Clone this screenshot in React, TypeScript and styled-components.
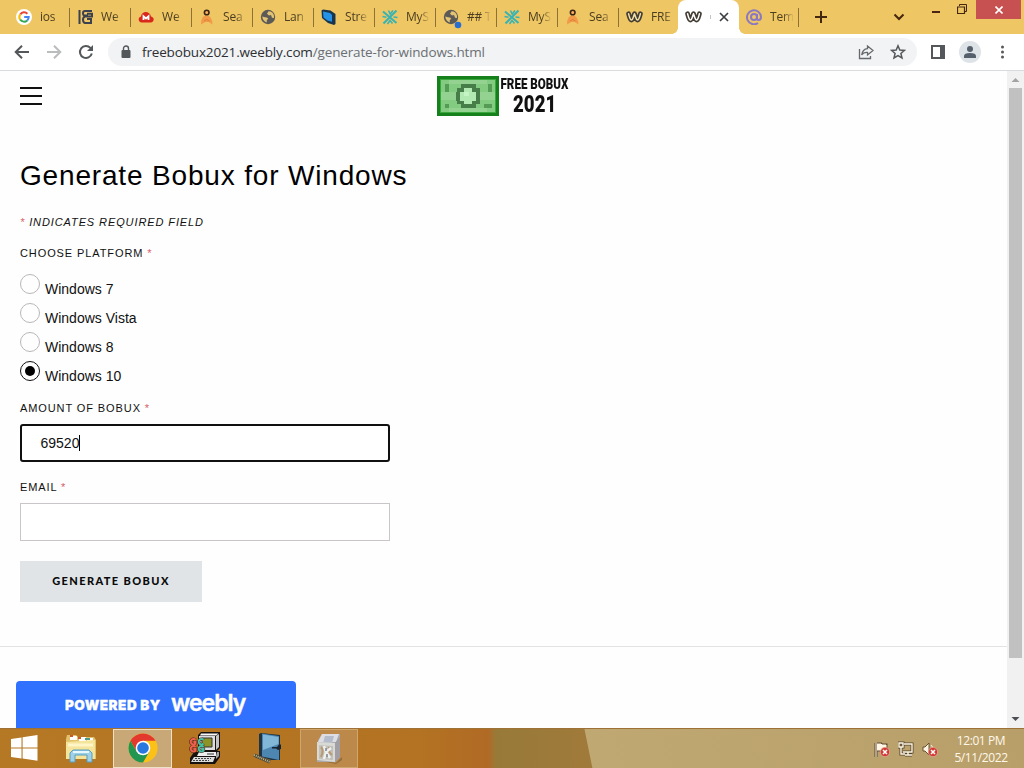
import { ReactNode, useState } from "react";
import styled, { createGlobalStyle } from "styled-components";

const GlobalStyle = createGlobalStyle`
  * {
    box-sizing: border-box;
  }
  body {
    margin: 0;
    overflow: hidden;
    background: white;
  }
`;
const Desktop = styled.div`
  width: 1024px;
  height: 768px;
  display: flex;
  flex-direction: column;
  overflow: hidden;
  font-family: "Open Sans", "Noto Sans", sans-serif;
`;
const TabStrip = styled.div`
  height: 34px;
  flex-shrink: 0;
  display: flex;
  padding-left: 9px;
  background: #eec664;
`;
const TabBox = styled.div<{ $active?: boolean; $line?: boolean; $width?: number }>`
  position: relative;
  width: ${(props) => props.$width || 61}px;
  height: 34px;
  flex-shrink: 0;
  display: flex;
  align-items: center;
  padding-left: 7px;
  background: ${(props) => (props.$active ? "#fff" : "transparent")};
  border-radius: ${(props) => (props.$active ? "8px 8px 0 0" : "0")};
  &::after {
    content: "";
    display: ${(props) => (props.$line ? "block" : "none")};
    position: absolute;
    right: 0;
    top: 8px;
    width: 1px;
    height: 19px;
    background: #8d7136;
  }
`;
const Flare = styled.i<{ $side: "left" | "right" }>`
  position: absolute;
  bottom: 0;
  ${(props) => props.$side}: -6px;
  width: 6px;
  height: 6px;
  background: radial-gradient(
    circle at ${(props) => (props.$side === "left" ? "0 0" : "6px 0")},
    transparent 5.5px,
    #fff 6px
  );
`;
const TabTitle = styled.span`
  width: 23px;
  margin-left: 8px;
  overflow: hidden;
  white-space: nowrap;
  font-size: 12px;
  line-height: 16px;
  letter-spacing: -0.2px;
  color: #4b3d20;
  mask-image: linear-gradient(to right, #000 13px, transparent 24px);
`;
const Icon = styled.svg`
  display: block;
  flex-shrink: 0;
`;
const TitleSliver = styled.i`
  width: 1px;
  height: 4px;
  margin: 0 8px 0 8px;
  background: #c4c4c6;
`;
const NewTab = styled(Icon)`
  margin: 10px 0 0 15px;
`;
const WindowControls = styled.div`
  display: flex;
  margin-left: auto;
  align-items: flex-start;
`;
const Chevron = styled(Icon)`
  margin: 13px 27px 0 0;
`;
const Minimize = styled.div`
  width: 8px;
  height: 2px;
  margin: 11px 17px 0 0;
  background: #4a2414;
`;
const Restore = styled(Icon)`
  margin: 4px 9px 0 0;
`;
const CloseWindow = styled.div`
  width: 45px;
  height: 19px;
  margin-right: 3px;
  display: flex;
  align-items: center;
  justify-content: center;
  background: #c75050;
`;
const Toolbar = styled.div`
  height: 37px;
  flex-shrink: 0;
  display: flex;
  align-items: center;
  padding: 0 12px 0 14px;
  border-bottom: 1px solid #dadbdd;
  background: #fff;
`;
const NavButtons = styled.div`
  display: flex;
  gap: 16px;
  width: 94px;
`;
const AddressBar = styled.div`
  width: 809px;
  height: 28px;
  display: flex;
  align-items: center;
  padding: 0 11px 0 12px;
  border-radius: 14px;
  background: #f1f3f4;
`;
const Url = styled.div`
  flex: 1;
  margin-left: 10px;
  font-size: 13.5px;
  line-height: 20px;
  letter-spacing: -0.15px;
  color: #6b6f73;
  span {
    color: #2d2f33;
  }
`;
const AddressActions = styled.div`
  display: flex;
  gap: 16px;
`;
const BrowserActions = styled.div`
  display: flex;
  align-items: center;
  margin-left: 13px;
`;
const Avatar = styled.div`
  width: 22px;
  height: 22px;
  margin: 0 13px 0 13px;
  display: flex;
  align-items: center;
  justify-content: center;
  border-radius: 50%;
  background: #dee3e8;
`;
const Viewport = styled.div`
  height: 657px;
  flex-shrink: 0;
  display: flex;
`;
const Page = styled.main`
  width: 1007px;
  display: flex;
  flex-direction: column;
  background: #fefefe;
  font-family: "Liberation Sans", Arial, sans-serif;
  color: #111;
`;
const SiteHeader = styled.header`
  height: 50px;
  display: grid;
  grid-template-columns: 417px 1fr;
  align-items: center;
  padding-left: 20px;
`;
const Burger = styled.div`
  width: 22px;
  height: 18px;
  border: solid #111;
  border-width: 2px 0;
  display: flex;
  align-items: center;
  &::before {
    content: "";
    width: 22px;
    height: 2px;
    background: #111;
  }
`;
const Brand = styled.div`
  display: flex;
  align-items: center;
  gap: 1px;
`;
const BrandText = styled.div`
  width: 69px;
  height: 40px;
  padding-top: 1px;
  display: flex;
  flex-direction: column;
  align-items: center;
  font-family: Roboto, sans-serif;
  font-weight: 900;
  color: #111;
`;
const BrandLine = styled.span<{ $size: number; $squeeze: number }>`
  font-size: ${(props) => props.$size}px;
  line-height: ${(props) => (props.$size > 20 ? 24 : 16)}px;
  white-space: nowrap;
  transform: scaleX(${(props) => props.$squeeze});
`;
const Content = styled.section`
  height: 526px;
  padding: 35px 0 0 20px;
  border-bottom: 1px solid #e3e3e3;
`;
const Title = styled.h2`
  margin: 0;
  font-size: 28px;
  line-height: 40px;
  font-weight: 400;
  letter-spacing: 0.83px;
  color: #000;
`;
const Label = styled.label<{ $top: number; $italic?: boolean }>`
  display: block;
  margin-top: ${(props) => props.$top}px;
  font-size: 11px;
  line-height: 16px;
  letter-spacing: 0.9px;
  text-transform: uppercase;
  font-style: ${(props) => (props.$italic ? "italic" : "normal")};
`;
const Star = styled.span`
  color: #d5606a;
`;
const Options = styled.div`
  margin-top: 13px;
  height: 116px;
`;
const Option = styled.div`
  height: 29px;
  display: flex;
  gap: 5px;
  font-size: 14px;
  line-height: 30px;
  cursor: pointer;
`;
const Radio = styled.span<{ $checked: boolean }>`
  width: 20px;
  height: 20px;
  display: flex;
  align-items: center;
  justify-content: center;
  border: 1px solid ${(props) => (props.$checked ? "#111" : "#b9b6b9")};
  border-radius: 50%;
  &::before {
    content: "";
    width: 10px;
    height: 10px;
    border-radius: 50%;
    background: ${(props) => (props.$checked ? "#000" : "transparent")};
  }
`;
const Field = styled.div<{ $focused?: boolean }>`
  width: 370px;
  height: 38px;
  margin-top: 8px;
  display: flex;
  align-items: center;
  padding-left: ${(props) => (props.$focused ? 18.5 : 20)}px;
  border: ${(props) => (props.$focused ? "2px solid #101010" : "1px solid #c9c5c9")};
  border-radius: ${(props) => (props.$focused ? 3 : 0)}px;
  font-size: 14px;
  background: #fff;
`;
const Caret = styled.i`
  width: 1px;
  height: 16px;
  background: #000;
`;
const Submit = styled.button`
  display: block;
  width: 182px;
  height: 41px;
  margin-top: 20px;
  padding: 0 0 2px;
  border: 0;
  background: #e0e4e7;
  font-family: Lato, sans-serif;
  font-size: 11px;
  font-weight: 900;
  letter-spacing: 1.4px;
  color: #0a0a0a;
`;
const WeeblyBadge = styled.div`
  width: 280px;
  height: 47px;
  margin: 34px 0 0 16px;
  display: flex;
  align-items: center;
  padding-left: 49px;
  border-radius: 4px 4px 0 0;
  background: #3071ff;
  color: #fff;
  font-family: Inter, sans-serif;
`;
const Powered = styled.span`
  width: 106px;
  font-size: 13.5px;
  font-weight: 900;
  letter-spacing: 0.5px;
  white-space: nowrap;
  -webkit-text-stroke: 0.3px #fff;
`;
const WeeblyName = styled.span`
  font-size: 23px;
  line-height: 30px;
  font-weight: 600;
  letter-spacing: -1px;
  margin-top: -4px;
  -webkit-text-stroke: 0.4px #fff;
`;
const Scrollbar = styled.div`
  width: 17px;
  display: flex;
  flex-direction: column;
  align-items: center;
  background: #f1f1f1;
`;
const Thumb = styled.div`
  width: 13px;
  height: 570px;
  margin-bottom: auto;
  background: #c1c1c1;
`;
const Taskbar = styled.footer`
  height: 40px;
  flex-shrink: 0;
  display: flex;
  border-top: 1px solid #9e7236;
  background:
    linear-gradient(78.5deg, transparent 580px, #c0a873 581px, #b89f6a 100%),
    linear-gradient(
      to right,
      #b57824 0,
      #b37322 420px,
      #b16a25 488px,
      #987a38 496px,
      #a17a3a 600px
    );
`;
const TaskButton = styled.div<{ $width: number; $state?: "active" | "open" }>`
  width: ${(props) => props.$width}px;
  height: 39px;
  display: flex;
  align-items: center;
  justify-content: center;
  padding-bottom: 2px;
  border: ${(props) =>
    props.$state === "active"
      ? "1px solid #eee1c9"
      : props.$state === "open"
        ? "1px solid #cfa66b"
        : "0"};
  background: ${(props) =>
    props.$state === "active"
      ? "#c9a878"
      : props.$state === "open"
        ? "#bd894a"
        : "transparent"};
`;
const Tray = styled.div`
  display: flex;
  align-items: center;
  gap: 8px;
  margin-left: auto;
`;
const Clock = styled.div`
  width: 86px;
  margin-left: -8px;
  text-align: center;
  font-size: 12px;
  line-height: 17px;
  letter-spacing: -0.4px;
  color: #fff8e9;
`;

const GoogleIcon = () => (
  <Icon width="16" height="16" viewBox="0 0 16 16" fill="none" strokeWidth="2">
    <circle cx="8" cy="8" r="8" fill="#fff" />
    <path d="M4.3 5.3A4.7 4.7 0 0 1 11.4 4.7" stroke="#ea4335" />
    <path d="M4.3 5.3A4.7 4.7 0 0 0 4.2 10.7" stroke="#fbbc05" />
    <path d="M4.2 10.7A4.7 4.7 0 0 0 11.2 11.4" stroke="#34a853" />
    <path d="M8.2 8H12.7A4.7 4.7 0 0 1 11.2 11.4" stroke="#4285f4" />
  </Icon>
);
const StackIcon = () => (
  <Icon width="16" height="16" viewBox="0 0 16 16" fill="none" stroke="#3b414e" strokeWidth="2">
    <path d="M2.5 1V15M15 2H8Q6 2 6 4.3T8 6.5H11M10 4.8H15V7.5H8Q6 8 6 10.8T8 14H14V10H10" />
  </Icon>
);
const CloudIcon = () => (
  <Icon width="16" height="16" viewBox="0 0 16 16">
    <path d="M4 13.5C-.5 13.5 0 8 3 7.5C3.5 1.5 12 1.5 13 7.5C17 8.5 16.3 13.5 12.5 13.5Z" fill="#d9271c" />
    <path d="M5.5 11V7.2L8 9.5L10.5 7.2V11" fill="none" stroke="#fff" strokeWidth="1.8" />
  </Icon>
);
const PersonIcon = () => (
  <Icon width="16" height="16" viewBox="0 0 16 16">
    <path d="M2 15.5Q2 6.5 7.5 6.5T13.5 15.5L9.8 13H6.2Z" fill="#f39a49" />
    <path d="M5 12Q7.7 9 10.5 12" fill="none" stroke="#d88135" />
    <circle cx="7.7" cy="3.5" r="2.3" fill="#f8b45b" stroke="#3e2318" strokeWidth="1.6" />
  </Icon>
);
const GlobeIcon = ({ dot }: { dot?: boolean }) => (
  <Icon width="16" height="16" viewBox="0 0 16 16" overflow="visible">
    <circle cx="8" cy="8" r="7.2" fill="#5c5a56" />
    <path d="M2.2 7.5L5 8.2Q8 8 8.2 10Q6 10.5 7 13.5Q3 12.5 2.2 7.5ZM8.5 2.2L7 4.8L9 6.5L11 6L12 8.8L14 9Q14.5 4 10.5 2.4Z" fill="#e2c373" />
    {dot ? <circle cx="15" cy="16" r="3.3" fill="#286ed2" /> : null}
  </Icon>
);
const BlocksIcon = () => (
  <Icon width="16" height="16" viewBox="0 0 16 16">
    <path d="M.5 1.5L2 .5L9.5 1.5L14.5 5V15L13 16L7 14L1 9Z" fill="#19344d" />
    <path d="M2 2.5L9 4L11 6V12.8L6.5 11.5L2.5 8.5Z" fill="#2493e7" />
  </Icon>
);
const MySiteIcon = () => (
  <Icon width="16" height="16" viewBox="0 0 16 16" fill="none" stroke="#35b3b5" strokeWidth="2">
    <path d="M1 2.5L14.5 14M14.5 1.5L1.5 14.5" />
    <path d="M6.5 1.5L8.2 5L11 1.5M5.5 15L8 11.5L10.5 14.5M.5 7.5L4.5 8.2M11.5 8L15.5 8.5" strokeWidth="1.5" />
  </Icon>
);
const WeeblyIcon = ({ light = "#f3dfaa" }: { light?: string }) => (
  <Icon width="17" height="16" viewBox="0 0 17 16" fill="none" strokeLinejoin="round" strokeLinecap="round">
    <path d="M2.6 4.8C3.5 8 4 11 5.5 11S7.5 7 8.5 4.8C9.5 7 10 11 11.5 11S13.5 8 14.4 4.8" stroke="#433d34" strokeWidth="4.8" />
    <path d="M2.6 4.8C3.5 8 4 11 5.5 11S7.5 7 8.5 4.8C9.5 7 10 11 11.5 11S13.5 8 14.4 4.8" stroke={light} strokeWidth="1.5" />
  </Icon>
);
const AtIcon = () => (
  <Icon width="16" height="16" viewBox="0 0 16 16" fill="none" stroke="#8b78c1" strokeWidth="2">
    <circle cx="8" cy="8" r="3" />
    <path d="M11 5V9.5Q11 11 12.5 11Q15 11 15 8A7 7 0 1 0 12 14" />
  </Icon>
);

const Money = () => (
  <Icon width="62" height="40" viewBox="0 0 62 40" shapeRendering="crispEdges">
    <path fill="#16801c" d="M0 0H62V40H0Z" />
    <path fill="#39a83c" d="M3 3H59V37H3Z" />
    <path fill="#83cb80" d="M4 4H58V36H4Z" />
    <path fill="#93d290" d="M12 4H50V8H12ZM4 16H19V24H4ZM43 16H58V24H43ZM12 32H50V36H12Z" />
    <path fill="#559b55" d="M8 8H12V16H8ZM8 28H12V32H8ZM51 8H55V16H51ZM47 28H55V32H47Z" />
    <path fill="#467d48" d="M24 8H39V12H24ZM20 12H27V16H20ZM35 12H43V16H35ZM19 16H23V25H19ZM39 16H43V25H39ZM20 25H27V28H20ZM35 25H43V28H35ZM24 28H39V32H24Z" />
    <path fill="#b2e8b1" d="M27 12H35V16H39V25H35V28H27V25H23V16H27Z" />
    <path fill="#c4f3c4" d="M27 16H32V20H27Z" />
  </Icon>
);

const WindowsLogo = () => (
  <Icon width="28" height="26" viewBox="0 0 28 26" fill="#fff">
    <path d="M1 4L11.5 2.4V12.4H1ZM12.6 2.2L27.5 0V12.4H12.6ZM1 13.4H11.5V23.4L1 22ZM12.6 13.4H27.5V25.8L12.6 23.6Z" />
  </Icon>
);
const FolderIcon = () => (
  <Icon width="32" height="32" viewBox="0 0 32 32">
    <path d="M1 7L2 3H11L13 5H29L31 8V27H1Z" fill="#e2c36b" />
    <path d="M5 4H12V8H5ZM14 5H21V9H14ZM22 6H28V10H22Z" fill="#fff" />
    <path d="M5 3H8V5H5ZM13 5H16V7H13Z" fill="#c8582d" />
    <path d="M20 6H25V8H20Z" fill="#4c9a87" />
    <path d="M1 10L30 8V27H1Z" fill="#f5e49b" />
    <path d="M3 13H28" stroke="#fff5c6" strokeWidth="3" />
    <path d="M5 30V21L8 18H24L27 21V30H22V23H10V30Z" fill="#9ed1e8" stroke="#599ebf" />
    <path d="M8 20H24" stroke="#e5f8fc" strokeWidth="2" />
  </Icon>
);
const ChromeIcon = () => (
  <Icon width="30" height="30" viewBox="0 0 30 30">
    <circle cx="15" cy="15" r="14.6" fill="#fbc116" />
    <path d="M2.4 7.7A14.6 14.6 0 0 1 27.6 7.7H15L8.7 18.6Z" fill="#e3382d" />
    <path d="M2.4 7.7A14.6 14.6 0 0 0 15 29.6L21.3 18.7H8.7Z" fill="#209650" />
    <circle cx="15" cy="15" r="7.3" fill="#fff" />
    <circle cx="15" cy="15" r="5.8" fill="#2878df" />
  </Icon>
);
const RetroPcIcon = () => (
  <Icon width="32" height="32" viewBox="0 0 32 32">
    <path d="M9 3L12 0H31V16L28 19H31V25L26 32H1V26L5 20H9Z" fill="#17120f" />
    <path d="M10 4H26V18H10Z" fill="#dedede" />
    <path d="M12 1.5H29.5L27 3.5H11Z" fill="#f8f8f8" />
    <path d="M27 4L30 2V15L27 18Z" fill="#c4c4c4" />
    <path d="M13 6H23V15H13Z" fill="#8c9427" stroke="#333" />
    <path d="M10 20H27V24H8Z" fill="#efefef" />
    <path d="M28 20H30V24L27 27V24Z" fill="#a6a6a6" />
    <path d="M5 25H26L24 30H2Z" fill="#dcdcdc" />
    <path d="M6 26.5H22M4 28.5H20" stroke="#444" strokeDasharray="2 1" />
    <path d="M18 22H25" stroke="#333" />
    <g fill="none" stroke="#54241a" strokeWidth="3.2">
      <path d="M6.5 8A2.7 2.7 0 1 0 6.5 11.5V10H4.5M6.5 15A2.7 2.7 0 1 0 6.5 18.5V17H4.5M14.5 8A2.7 2.7 0 1 0 14.5 11.5M14.5 15A2.7 2.7 0 1 0 14.5 18.5V17H12.5" />
    </g>
    <g fill="none" strokeWidth="2">
      <path d="M6.5 8A2.7 2.7 0 1 0 6.5 11.5V10H4.5M6.5 15A2.7 2.7 0 1 0 6.5 18.5V17H4.5" stroke="#ef614e" />
      <path d="M14.5 8A2.7 2.7 0 1 0 14.5 11.5M14.5 15A2.7 2.7 0 1 0 14.5 18.5V17H12.5" stroke="#43c4a5" />
    </g>
  </Icon>
);
const BookIcon = () => (
  <Icon width="32" height="32" viewBox="0 0 32 32">
    <path d="M6 2L8 1L27 3V28L18 28L6 24Z" fill="#1e3444" />
    <path d="M9 1.5L26 4V28L9 24.5Z" fill="#4c86b1" />
    <path d="M10 2.5L25.5 5V12L10 18Z" fill="#83b7d8" />
    <path d="M19 15H24L26 12.5H28V17L25 18L23 16.5H19Z" fill="#1b2530" />
    <path d="M1 23L17 30" stroke="#4d4739" strokeWidth="3.5" />
    <path d="M1 23L17 30" stroke="#c2b98b" strokeWidth="2" strokeDasharray="1 1" />
  </Icon>
);
const InstallerIcon = () => (
  <Icon width="32" height="32" viewBox="0 0 32 32">
    <path d="M4 28L23 31L29 25V28L23 32Z" fill="#8f6d3f" />
    <path d="M5 8L9 2H27V25L22 30H4Z" fill="#aaa9ac" />
    <path d="M9 2H26L23 10H5Z" fill="#dedde4" />
    <path d="M12 4H21L19 11H10Z" fill="#b4bccb" />
    <path d="M4 10L22 11V30L4 28Z" fill="#d9d9d6" />
    <path d="M22 11L27 5V25L22 30Z" fill="#a19ea5" />
    <path d="M6 13L20 14V28L6 27Z" fill="#c2c0b9" />
    <path d="M8 15Q11 18 8 25M16 15Q15 20 19 23" fill="none" stroke="#b9996f" strokeWidth="2" />
    <path d="M11 14L13 20L11 27M18 16L13 20L17 26" fill="none" stroke="#eff0f1" strokeWidth="2.5" />
    <path d="M13 16V19M14 22V25" stroke="#7d8489" strokeWidth="1.5" />
  </Icon>
);
const RedCross = () => (
  <g>
    <circle cx="11" cy="12" r="4.7" fill="#cf3e36" stroke="#efb8a6" strokeWidth=".6" />
    <path d="M9 10L13 14M13 10L9 14" stroke="#fff" strokeWidth="1.5" />
  </g>
);

const tabs: { title: string; icon: ReactNode }[] = [
  { title: "ios", icon: <GoogleIcon /> },
  { title: "We", icon: <StackIcon /> },
  { title: "We", icon: <CloudIcon /> },
  { title: "Sea", icon: <PersonIcon /> },
  { title: "Lan", icon: <GlobeIcon /> },
  { title: "Stre", icon: <BlocksIcon /> },
  { title: "MyS", icon: <MySiteIcon /> },
  { title: "## T", icon: <GlobeIcon dot /> },
  { title: "MyS", icon: <MySiteIcon /> },
  { title: "Sea", icon: <PersonIcon /> },
];
const platforms = ["Windows 7", "Windows Vista", "Windows 8", "Windows 10"];

function Browser() {
  return (
    <>
      <TabStrip>
        {tabs.map((tab, index) => (
          <TabBox key={index} $line>
            {tab.icon}
            <TabTitle>{tab.title}</TabTitle>
          </TabBox>
        ))}
        <TabBox $width={59}>
          <WeeblyIcon />
          <TabTitle>FRE</TabTitle>
        </TabBox>
        <TabBox $active>
          <Flare $side="left" />
          <WeeblyIcon light="#fff" />
          <TitleSliver />
          <Icon width="10" height="10" viewBox="0 0 10 10" stroke="#3c4043" strokeWidth="1.7">
            <path d="M1 1L9 9M9 1L1 9" />
          </Icon>
          <Flare $side="right" />
        </TabBox>
        <TabBox $line $width={60}>
          <AtIcon />
          <TabTitle>Tem</TabTitle>
        </TabBox>
        <NewTab width="14" height="14" viewBox="0 0 14 14" stroke="#43270e" strokeWidth="2">
          <path d="M7 1V13M1 7H13" />
        </NewTab>
        <WindowControls>
          <Chevron width="12" height="8" viewBox="0 0 12 8" fill="none" stroke="#43270e" strokeWidth="2">
            <path d="M1.5 1.5L6 6L10.5 1.5" />
          </Chevron>
          <Minimize />
          <Restore width="10" height="10" viewBox="0 0 10 10" fill="none" stroke="#43270e">
            <path d="M2.5 2V.5H9.5V7.5H8" />
            <path d="M.5 3H7.5V9.5H.5Z" strokeWidth="1.2" />
          </Restore>
          <CloseWindow>
            <Icon width="8" height="8" viewBox="0 0 8 8" stroke="#fff" strokeWidth="1.6">
              <path d="M.5 .5L7.5 7.5M7.5 .5L.5 7.5" />
            </Icon>
          </CloseWindow>
        </WindowControls>
      </TabStrip>
      <Toolbar>
        <NavButtons>
          <Icon width="16" height="16" viewBox="0 0 16 16" fill="none" stroke="#55585b" strokeWidth="2">
            <path d="M15 8H2M8 1.7L1.7 8L8 14.3" />
          </Icon>
          <Icon width="16" height="16" viewBox="0 0 16 16" fill="none" stroke="#babcbe" strokeWidth="2">
            <path d="M1 8H14M8 1.7L14.3 8L8 14.3" />
          </Icon>
          <Icon width="16" height="16" viewBox="0 0 16 16" fill="none" stroke="#55585b" strokeWidth="2">
            <path d="M13.8 9.5A6 6 0 1 1 12.4 3.9L14.5 6" />
            <path d="M15 1V7H9Z" fill="#55585b" stroke="none" />
          </Icon>
        </NavButtons>
        <AddressBar>
          <Icon width="12" height="14" viewBox="0 0 12 14">
            <rect x="1.5" y="5" width="9" height="8" rx="1" fill="#55585b" />
            <path d="M3.5 5V3.5A2.5 2.5 0 0 1 8.5 3.5V5" fill="none" stroke="#55585b" strokeWidth="1.4" />
          </Icon>
          <Url>
            <span>freebobux2021.weebly.com</span>/generate-for-windows.html
          </Url>
          <AddressActions>
            <Icon width="16" height="16" viewBox="0 0 16 16" fill="none" stroke="#65686c" strokeWidth="1.3">
              <path d="M1.5 5V14.5H12.5V12" />
              <path d="M9.5 2L15 6.5L9.5 11V8.5Q5.5 8.2 3.7 11Q4.5 5 9.5 4.6Z" />
            </Icon>
            <Icon width="16" height="16" viewBox="0 0 16 16" fill="none" stroke="#55585b" strokeWidth="1.5">
              <path d="M8 1.8L9.8 6L14.4 6.4L10.9 9.4L12 13.9L8 11.5L4 13.9L5.1 9.4L1.6 6.4L6.2 6Z" />
            </Icon>
          </AddressActions>
        </AddressBar>
        <BrowserActions>
          <Icon width="16" height="14" viewBox="0 0 16 14">
            <path d="M1 0H15V14H1ZM3 2V12H10V2Z" fill="#55585b" fillRule="evenodd" />
          </Icon>
          <Avatar>
            <Icon width="14" height="14" viewBox="0 0 14 14" fill="#55606b">
              <circle cx="7" cy="4" r="3" />
              <path d="M1 13V11Q1 8 7 8T13 11V13Z" />
            </Icon>
          </Avatar>
          <Icon width="16" height="14" viewBox="0 0 16 14" fill="#55585b">
            <circle cx="8.5" cy="2" r="1.5" />
            <circle cx="8.5" cy="7" r="1.5" />
            <circle cx="8.5" cy="12" r="1.5" />
          </Icon>
        </BrowserActions>
      </Toolbar>
    </>
  );
}

function App() {
  const [platform, setPlatform] = useState("Windows 10");
  return (
    <Desktop>
      <GlobalStyle />
      <Browser />
      <Viewport>
        <Page>
          <SiteHeader>
            <Burger />
            <Brand>
              <Money />
              <BrandText>
                <BrandLine $size={14.5} $squeeze={0.8}>
                  FREE BOBUX
                </BrandLine>
                <BrandLine $size={23} $squeeze={0.81}>
                  2021
                </BrandLine>
              </BrandText>
            </Brand>
          </SiteHeader>
          <Content>
            <Title>Generate Bobux for Windows</Title>
            <Label $top={18} $italic>
              <Star>*</Star> Indicates required field
            </Label>
            <Label $top={15}>
              Choose platform <Star>*</Star>
            </Label>
            <Options>
              {platforms.map((item) => (
                <Option key={item} onClick={() => setPlatform(item)}>
                  <Radio $checked={item === platform} />
                  {item}
                </Option>
              ))}
            </Options>
            <Label $top={10}>
              Amount of Bobux <Star>*</Star>
            </Label>
            <Field $focused>
              69520
              <Caret />
            </Field>
            <Label $top={17}>
              Email <Star>*</Star>
            </Label>
            <Field />
            <Submit>GENERATE BOBUX</Submit>
          </Content>
          <WeeblyBadge>
            <Powered>POWERED BY</Powered>
            <WeeblyName>weebly</WeeblyName>
          </WeeblyBadge>
        </Page>
        <Scrollbar>
          <Icon width="17" height="17" viewBox="0 0 17 17" fill="#a3a3a3">
            <path d="M4.5 11L8.5 7L12.5 11Z" />
          </Icon>
          <Thumb />
          <Icon width="17" height="17" viewBox="0 0 17 17" fill="#4d4d55">
            <path d="M4.5 6L8.5 10L12.5 6Z" />
          </Icon>
        </Scrollbar>
      </Viewport>
      <Taskbar>
        <TaskButton $width={48}>
          <WindowsLogo />
        </TaskButton>
        <TaskButton $width={65}>
          <FolderIcon />
        </TaskButton>
        <TaskButton $width={59} $state="active">
          <ChromeIcon />
        </TaskButton>
        <TaskButton $width={65}>
          <RetroPcIcon />
        </TaskButton>
        <TaskButton $width={63}>
          <BookIcon />
        </TaskButton>
        <TaskButton $width={58} $state="open">
          <InstallerIcon />
        </TaskButton>
        <Tray>
          <Icon width="16" height="18" viewBox="0 0 16 18">
            <path d="M2 3V17M3 4H7L8 5H12V10H3" fill="#fff7e3" stroke="#5e4b32" strokeWidth="3" />
            <path d="M2 3V17M3 4H7L8 5H12V10H3" fill="#fff7e3" stroke="#fff7e3" />
            <RedCross />
          </Icon>
          <Icon width="16" height="18" viewBox="0 0 16 18" fill="none">
            <path d="M6 4H14V12H5M7 15H14M10 12V15M1 3H5V7H1ZM3 7V14H7" stroke="#54442e" strokeWidth="3" />
            <path d="M6 4H14V12H5M7 15H14M10 12V15M1 3H5V7H1ZM3 7V14H7" stroke="#fff7e3" strokeWidth="1.4" />
          </Icon>
          <Icon width="16" height="18" viewBox="0 0 16 18">
            <path d="M1 7H3L7 3V15L3 11H1Z" fill="#fff7e3" stroke="#665036" />
            <path d="M9 5Q11 7 11 9" fill="none" stroke="#fff7e3" />
            <RedCross />
          </Icon>
          <Clock>
            12:01 PM
            <br />
            5/11/2022
          </Clock>
        </Tray>
      </Taskbar>
    </Desktop>
  );
}

export default App;
